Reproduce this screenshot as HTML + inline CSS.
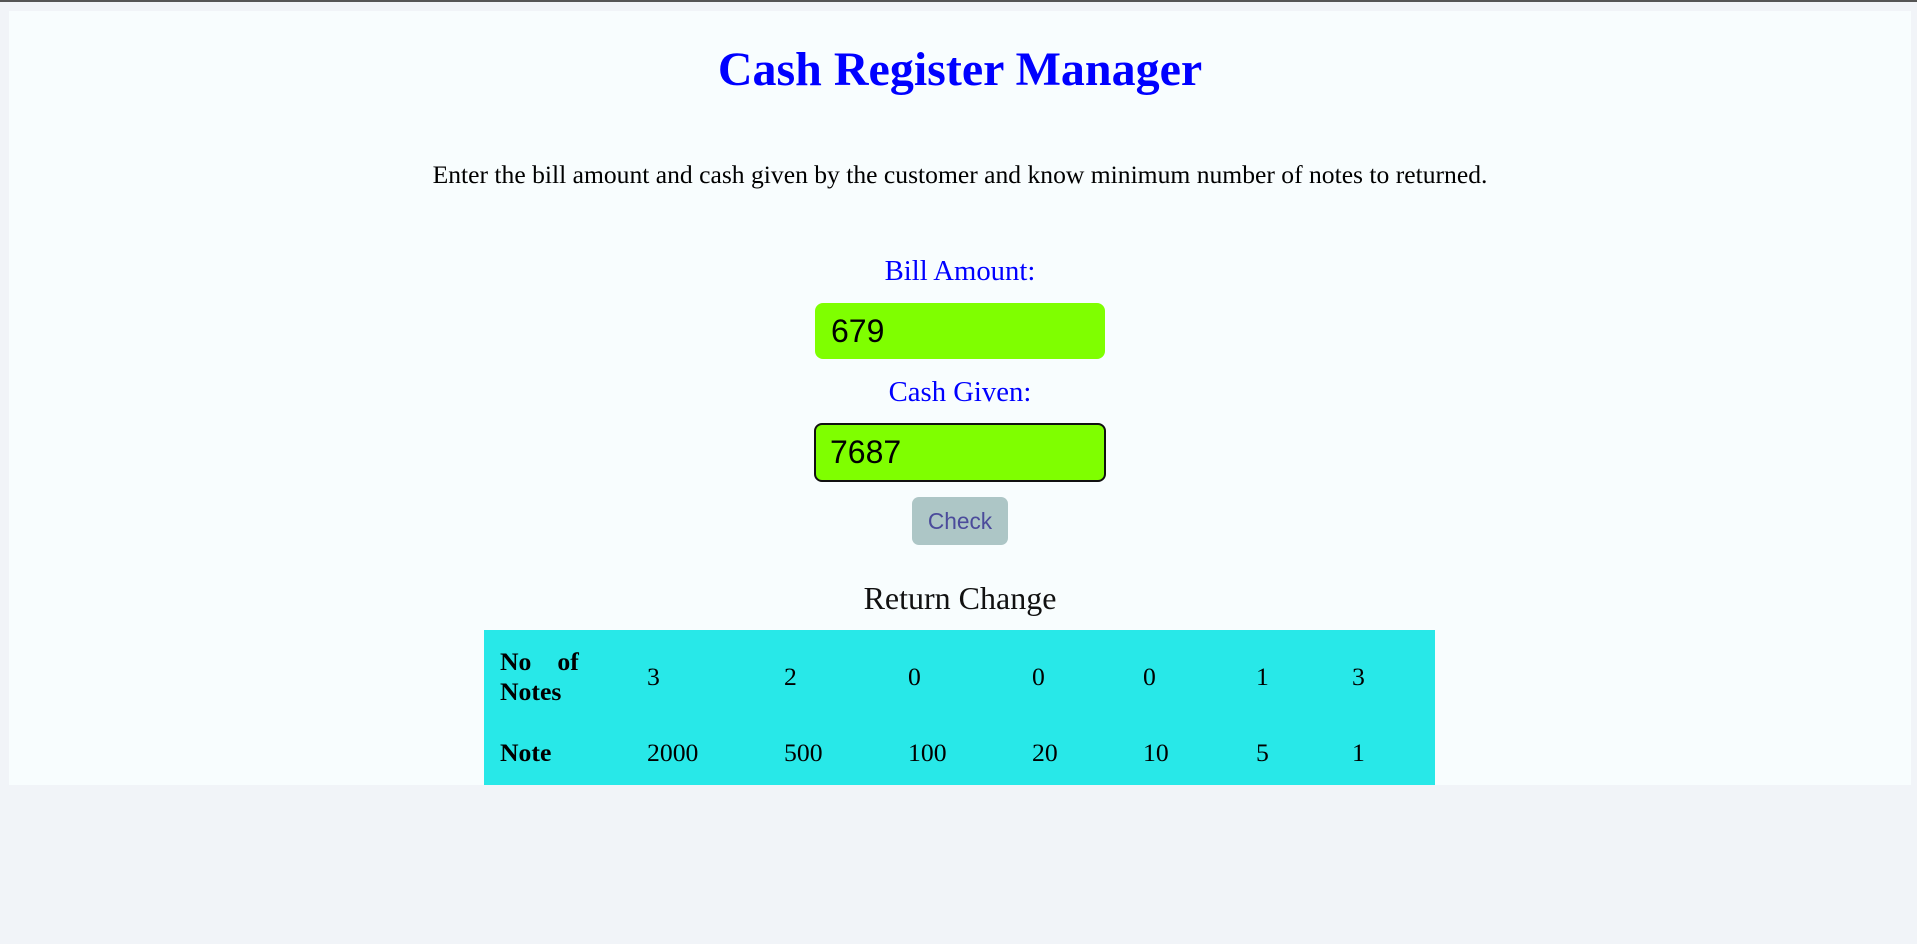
<!DOCTYPE html>
<html><head><meta charset="utf-8"><style>
html,body{margin:0;padding:0}
body{width:1917px;height:944px;background:#f1f4f8;position:relative;overflow:hidden;font-family:"Liberation Serif",serif}
.topbar{position:absolute;left:0;top:0;width:1917px;height:2px;background:#555}
.panel{position:absolute;left:9px;top:11px;width:1902px;height:774px;background:#f8fdfe;overflow:hidden}
.a{position:absolute;white-space:nowrap}
.c{left:0;width:1902px;text-align:center}
h1{margin:0;font-size:48px;color:#0000ff;font-weight:bold;line-height:56px}
.inp{position:absolute;background:#7fff00;border-radius:8px;box-sizing:border-box;font-family:"Liberation Sans",sans-serif;font-size:32px;color:#000;padding-left:16px}
.btn{position:absolute;left:903px;top:486px;width:96px;height:48px;background:#adc6c6;border-radius:7px;color:#4b4b9b;font-family:"Liberation Sans",sans-serif;font-size:22.7px;text-align:center;line-height:48px}
.tbl{position:absolute;left:475px;top:619px;width:951px;height:200px;background:#28e8e8}
.cell{position:absolute;font-size:25.7px;color:#000;line-height:30px}
b{font-weight:bold}
</style></head><body>
<div class="topbar"></div>
<div class="panel">
<h1 class="a c" style="top:31px">Cash Register Manager</h1>
<div class="a c" style="top:148px;font-size:25.6px;line-height:32px">Enter the bill amount and cash given by the customer and know minimum number of notes to returned.</div>
<div class="a c" style="top:243px;font-size:28.7px;color:#0000ff;line-height:34px">Bill Amount:</div>
<div class="inp" style="left:806px;top:292px;width:290px;height:56px;line-height:56px">679</div>
<div class="a c" style="top:364px;font-size:28.7px;color:#0000ff;line-height:34px">Cash Given:</div>
<div class="inp" style="left:805px;top:412px;width:292px;height:59px;line-height:55px;border:2px solid #111;padding-left:14px">7687</div>
<div class="btn">Check</div>
<div class="a c" style="top:568px;font-size:32px;color:#111;line-height:38px">Return Change</div>
<div class="tbl">
<div class="cell" style="left:16px;top:17px;width:84px"><b>No<span style="display:inline-block;width:26px"></span>of<br>Notes</b></div>
<div class="cell" style="left:163px;top:32px">3</div>
<div class="cell" style="left:300px;top:32px">2</div>
<div class="cell" style="left:424px;top:32px">0</div>
<div class="cell" style="left:548px;top:32px">0</div>
<div class="cell" style="left:659px;top:32px">0</div>
<div class="cell" style="left:772px;top:32px">1</div>
<div class="cell" style="left:868px;top:32px">3</div>
<div class="cell" style="left:16px;top:108px"><b>Note</b></div>
<div class="cell" style="left:163px;top:108px">2000</div>
<div class="cell" style="left:300px;top:108px">500</div>
<div class="cell" style="left:424px;top:108px">100</div>
<div class="cell" style="left:548px;top:108px">20</div>
<div class="cell" style="left:659px;top:108px">10</div>
<div class="cell" style="left:772px;top:108px">5</div>
<div class="cell" style="left:868px;top:108px">1</div>
</div>
</div>
</body></html>
